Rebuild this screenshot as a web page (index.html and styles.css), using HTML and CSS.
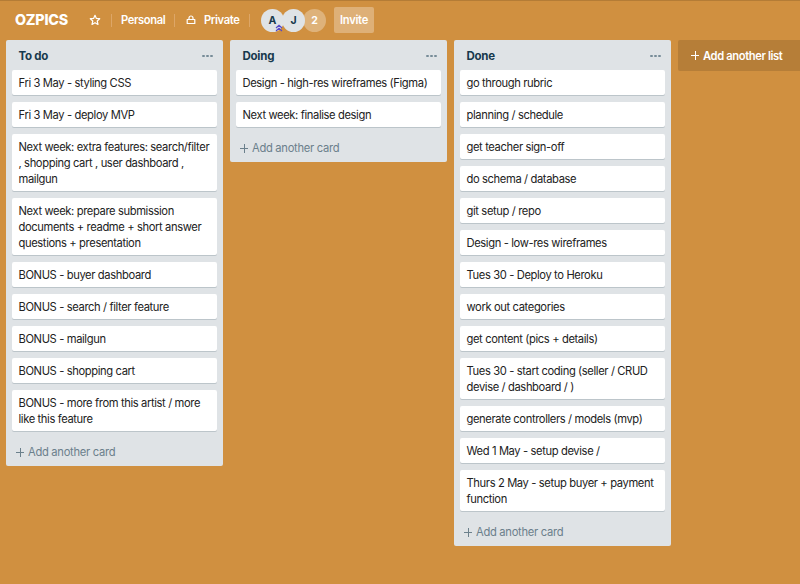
FILE: index.html
```html
<!DOCTYPE html>
<html lang="en">
<head>
<meta charset="utf-8">
<title>OZPICS</title>
<link rel="stylesheet" href="styles.css">
</head>
<body>
<header class="bar">
  <h1 class="title">OZPICS</h1>
  <svg class="star" viewBox="0 0 12 12"><path d="M6 1.3 7.4 4.4 10.7 4.7 8.2 7 9 10.4 6 8.7 3 10.4 3.8 7 1.3 4.7 4.6 4.4Z"/></svg>
  <i class="rule"></i>
  <span class="label personal">Personal</span>
  <i class="rule"></i>
  <svg class="lock" viewBox="0 0 10 10"><path d="M1.2 4.5h7.6v4H1.2zM3 4.5V3a2 2 0 0 1 4 0v1.5"/></svg>
  <span class="label private">Private</span>
  <i class="rule"></i>
  <div class="members">
    <span class="avatar">A<svg class="badge" viewBox="0 0 8 8"><path d="M1 4 4 1.2 7 4M1 7 4 4.2 7 7"/></svg></span>
    <span class="avatar">J</span>
    <span class="avatar more">2</span>
  </div>
  <button class="invite">Invite</button>
</header>
<main class="board">
  <section class="list">
    <div class="head"><h2>To do</h2><span class="dots"><i></i><i></i><i></i></span></div>
    <div class="cards">
      <div class="card">Fri 3 May - styling CSS</div>
      <div class="card">Fri 3 May - deploy MVP</div>
      <div class="card">Next week: extra features: search/filter<br>, shopping cart , user dashboard ,<br>mailgun</div>
      <div class="card">Next week: prepare submission<br>documents + readme + short answer<br>questions + presentation</div>
      <div class="card">BONUS - buyer dashboard</div>
      <div class="card">BONUS - search / filter feature</div>
      <div class="card">BONUS - mailgun</div>
      <div class="card">BONUS - shopping cart</div>
      <div class="card">BONUS - more from this artist / more<br>like this feature</div>
    </div>
    <div class="add"><i class="plus"></i><span>Add another card</span></div>
  </section>
  <section class="list">
    <div class="head"><h2>Doing</h2><span class="dots"><i></i><i></i><i></i></span></div>
    <div class="cards">
      <div class="card">Design - high-res wireframes (Figma)</div>
      <div class="card">Next week: finalise design</div>
    </div>
    <div class="add"><i class="plus"></i><span>Add another card</span></div>
  </section>
  <section class="list">
    <div class="head"><h2>Done</h2><span class="dots"><i></i><i></i><i></i></span></div>
    <div class="cards">
      <div class="card">go through rubric</div>
      <div class="card">planning / schedule</div>
      <div class="card">get teacher sign-off</div>
      <div class="card">do schema / database</div>
      <div class="card">git setup / repo</div>
      <div class="card">Design - low-res wireframes</div>
      <div class="card">Tues 30 - Deploy to Heroku</div>
      <div class="card">work out categories</div>
      <div class="card">get content (pics + details)</div>
      <div class="card">Tues 30 - start coding (seller / CRUD<br>devise / dashboard / )</div>
      <div class="card">generate controllers / models (mvp)</div>
      <div class="card">Wed 1 May - setup devise /</div>
      <div class="card">Thurs 2 May - setup buyer + payment<br>function</div>
    </div>
    <div class="add"><i class="plus"></i><span>Add another card</span></div>
  </section>
  <div class="add-list"><i class="plus"></i><span>Add another list</span></div>
</main>
</body>
</html>
```
FILE: styles.css
```css
* { box-sizing: border-box; }
body {
  margin: 0;
  height: 584px;
  overflow: hidden;
  background: #d09040;
  border-top: 1px solid #b47c36;
  font: 11.2px/16px Inter, "Liberation Sans", sans-serif;
  letter-spacing: -0.38px;
  color: #222;
}
h1, h2 { margin: 0; }
.bar {
  display: flex;
  align-items: center;
  height: 39px;
  padding: 0 0 1px 15px;
  color: #fff;
}
.title { width: 74px; font-size: 14.3px; line-height: 20px; font-weight: 800; letter-spacing: -0.2px; }
.star { width: 12px; height: 12px; margin-right: 10px; }
.star path, .lock path { fill: none; stroke: #fff; stroke-width: 1.2; stroke-linejoin: round; }
.rule { width: 1px; height: 13px; background: #dda667; }
.label { font-weight: 600; white-space: nowrap; }
.personal { width: 53px; margin-left: 9px; }
.lock { width: 10px; height: 10px; margin: 0 8px 0 11px; }
.private { width: 45px; }
.members { display: flex; margin-left: 11px; letter-spacing: 0; }
.avatar {
  position: relative;
  width: 23px;
  height: 23px;
  margin-right: -2px;
  border-radius: 50%;
  background: #dfe3e6;
  color: #17394d;
  font-size: 10.5px;
  font-weight: 700;
  line-height: 23px;
  text-align: center;
}
.avatar:first-child { z-index: 1; }
.avatar.more { margin-right: 0; background: #deb27a; color: #fff; z-index: -1; }
.badge { position: absolute; right: 1px; bottom: 0; width: 8px; height: 8px; }
.badge path { fill: none; stroke: #5548c8; stroke-width: 1.2; }
.invite {
  width: 40px;
  height: 26px;
  margin-left: 8px;
  padding: 0;
  border: 0;
  border-radius: 2px;
  background: #deb077;
  color: #fff;
  font: 600 11.2px/26px Inter, sans-serif;
  letter-spacing: -0.3px;
}
.board { display: flex; align-items: flex-start; gap: 7px; padding-left: 6px; }
.list { flex: none; width: 217px; border-radius: 2px; background: #dfe3e6; }
.head { display: flex; justify-content: space-between; height: 30px; padding: 7.5px 10.5px 0 12.5px; }
.head h2 { font-size: 11.5px; line-height: 16px; font-weight: 700; letter-spacing: -0.25px; color: #17394d; }
.dots { display: flex; gap: 1.6px; padding-top: 7px; }
.dots i { width: 2.4px; height: 2.4px; border-radius: 50%; background: #778c98; }
.cards { display: grid; grid-template-columns: minmax(0, 1fr); gap: 7px; padding: 0 6px; }
.card {
  padding: 5px 0 4px 6.5px;
  border-radius: 2px;
  background: #fff;
  box-shadow: 0 1px 0 #bcc5ca;
  white-space: nowrap;
}
.add { display: flex; align-items: center; gap: 4px; height: 35px; padding: 7px 0 0 10px; color: #6b808c; letter-spacing: -0.3px; }
.plus {
  width: 8px;
  height: 9px;
  background: linear-gradient(currentColor, currentColor) center / 8px 1px no-repeat, linear-gradient(currentColor, currentColor) center / 1px 9px no-repeat;
}
.add-list {
  flex: 1;
  display: flex;
  align-items: center;
  gap: 4px;
  height: 31px;
  padding-left: 13px;
  border-radius: 2px 0 0 2px;
  background: #b67e38;
  color: #fff;
  font-weight: 600;
}
```
